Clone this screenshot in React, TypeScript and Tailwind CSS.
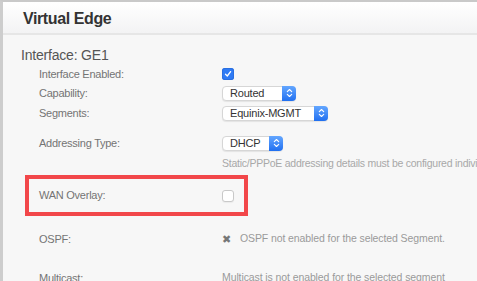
import React from "react";

const font = { fontFamily: '"Liberation Sans", Arial, sans-serif' };

function Check({ checked }: { checked: boolean }) {
  if (checked) {
    return (
      <div className="w-[12px] h-[12px] rounded-[3px] bg-[#2f7bf5] flex items-center justify-center shadow-[inset_0_0_0_1px_#2a6fe0]">
        <svg width="8" height="8" viewBox="0 0 8 8">
          <path d="M1.5 4.3 L3.3 6 L6.6 1.6" fill="none" stroke="white" strokeWidth="1.3" strokeLinecap="round" strokeLinejoin="round" />
        </svg>
      </div>
    );
  }
  return <div className="w-[12px] h-[12px] rounded-[3px] bg-white border border-[#c9c9c9] shadow-[0_1px_1px_rgba(0,0,0,0.05)]" />;
}

function Select({ label, width }: { label: string; width: string }) {
  return (
    <div className={`${width} h-[15px] flex items-stretch rounded-[4px] bg-white border border-[#d6d6d6] shadow-[0_1px_1px_rgba(0,0,0,0.08)]`}>
      <div className="flex-1 flex items-center pl-[7px] text-[11px] text-[#333] tracking-[-0.2px] leading-none">{label}</div>
      <div className="w-[14px] -my-px -mr-px rounded-r-[4px] bg-gradient-to-b from-[#63a6ff] to-[#1f6ff0] flex items-center justify-center">
        <svg width="7" height="10" viewBox="0 0 7 10">
          <path d="M1.3 3.6 L3.5 1.5 L5.7 3.6 M1.3 6.4 L3.5 8.5 L5.7 6.4" fill="none" stroke="white" strokeWidth="1.1" strokeLinecap="round" strokeLinejoin="round" />
        </svg>
      </div>
    </div>
  );
}

function Row({ label, h, mt, children }: { label: string; h: string; mt?: string; children?: React.ReactNode }) {
  return (
    <div className={`flex items-center ${h} ${mt ?? ""}`}>
      <div className="w-[201px] pl-[18px] text-[11px] text-[#747474] tracking-[-0.25px] leading-none shrink-0">{label}</div>
      <div className="flex items-center whitespace-nowrap">{children}</div>
    </div>
  );
}

export default function App() {
  return (
    <div style={font} className="w-[477px] h-[281px] overflow-hidden bg-[#f7f7f7] border-t-2 border-l-[3px] border-t-[#c9c9c9] border-l-[#cdcdcd] flex flex-col">
      <div className="h-[33px] shrink-0 bg-gradient-to-b from-white to-[#f3f3f4] border-b-2 border-[#e6e6e6] flex items-center pl-[20px] pt-[2px]">
        <span className="text-[16px] font-bold text-[#333] tracking-[-0.4px]">Virtual Edge</span>
      </div>
      <div className="pl-[18px] flex flex-col">
        <div className="mt-[10px] h-[20px] flex items-center text-[14px] text-[#555] tracking-[-0.2px]">Interface: GE1</div>
        <Row label="Interface Enabled:" h="h-[18px]">
          <Check checked />
        </Row>
        <Row label="Capability:" h="h-[20px]">
          <Select label="Routed" width="w-[74px]" />
        </Row>
        <Row label="Segments:" h="h-[20px]">
          <Select label="Equinix-MGMT" width="w-[106px]" />
        </Row>
        <Row label="Addressing Type:" h="h-[20px]" mt="mt-[10px]">
          <Select label="DHCP" width="w-[61px]" />
        </Row>
        <div className="mt-[4px] h-[14px] flex items-center">
          <div className="w-[201px] shrink-0" />
          <span className="text-[10.5px] text-[#a8a8a8] whitespace-nowrap tracking-[-0.25px]">
            Static/PPPoE addressing details must be configured individually
          </span>
        </div>
        <div className="mt-[4px] ml-[4px] w-[223px] h-[41px] border-[4px] border-[#f2474a] flex items-center">
          <div className="w-[193px] pl-[10px] text-[11px] text-[#747474] tracking-[-0.25px] leading-none shrink-0">WAN Overlay:</div>
          <Check checked={false} />
        </div>
        <Row label="OSPF:" h="h-[20px]" mt="mt-[13px]">
          <span className="text-[11px] text-[#777] mr-[9px] leading-none">✖</span>
          <span className="text-[10.5px] text-[#9a9a9a] tracking-[-0.1px]">OSPF not enabled for the selected Segment.</span>
        </Row>
        <Row label="Multicast:" h="h-[20px]" mt="mt-[19px]">
          <span className="text-[10.5px] text-[#9a9a9a] tracking-[-0.1px]">Multicast is not enabled for the selected segment</span>
        </Row>
      </div>
    </div>
  );
}
